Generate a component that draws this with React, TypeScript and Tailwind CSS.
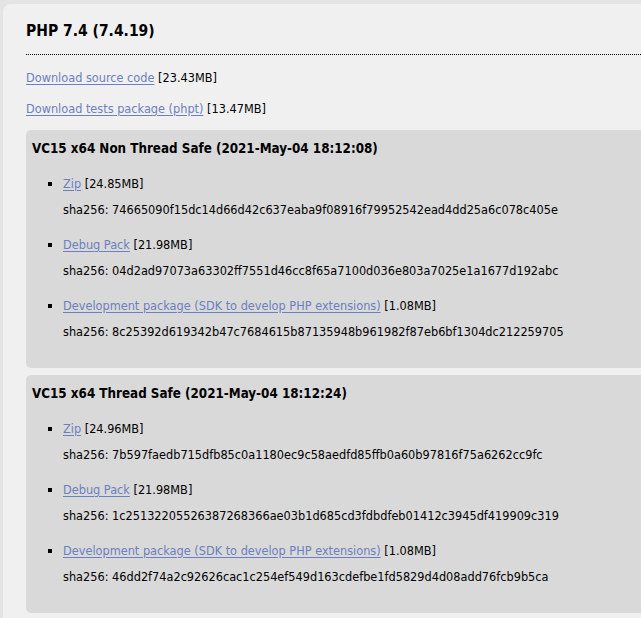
import React from "react";

const link = "text-[#6c7fbf] underline underline-offset-[2px] decoration-[#6c7fbf]";

type Item = { name: string; size: string; sha: string };

const boxes: { title: string; items: Item[] }[] = [
  {
    title: "VC15 x64 Non Thread Safe (2021-May-04 18:12:08)",
    items: [
      { name: "Zip", size: "[24.85MB]", sha: "74665090f15dc14d66d42c637eaba9f08916f79952542ead4dd25a6c078c405e" },
      { name: "Debug Pack", size: "[21.98MB]", sha: "04d2ad97073a63302ff7551d46cc8f65a7100d036e803a7025e1a1677d192abc" },
      { name: "Development package (SDK to develop PHP extensions)", size: "[1.08MB]", sha: "8c25392d619342b47c7684615b87135948b961982f87eb6bf1304dc212259705" },
    ],
  },
  {
    title: "VC15 x64 Thread Safe (2021-May-04 18:12:24)",
    items: [
      { name: "Zip", size: "[24.96MB]", sha: "7b597faedb715dfb85c0a1180ec9c58aedfd85ffb0a60b97816f75a6262cc9fc" },
      { name: "Debug Pack", size: "[21.98MB]", sha: "1c25132205526387268366ae03b1d685cd3fdbdfeb01412c3945df419909c319" },
      { name: "Development package (SDK to develop PHP extensions)", size: "[1.08MB]", sha: "46dd2f74a2c92626cac1c254ef549d163cdefbe1fd5829d4d08add76fcb9b5ca" },
    ],
  },
];

function Box({ title, items }: { title: string; items: Item[] }) {
  return (
    <div className="bg-[#d9d9d9] rounded-l-[5px] pt-[11px] pb-[28px] pl-[6px]">
      <div className="font-bold text-[13.3px] leading-[16px]">{title}</div>
      {items.map((it) => (
        <div key={it.name} className="mt-[19px]">
          <div className="flex items-center leading-[16px]">
            <span className="ml-[16px] w-[4px] h-[4px] bg-black shrink-0" />
            <span className="ml-[11px] whitespace-nowrap">
              <a href="#" className={link}>{it.name}</a> {it.size}
            </span>
          </div>
          <div className="mt-[10px] ml-[31px] leading-[16px] whitespace-nowrap">sha256: {it.sha}</div>
        </div>
      ))}
    </div>
  );
}

export default function App() {
  return (
    <div
      className="w-full h-[618px] overflow-hidden bg-[#e4e4e4] pt-[4px] pl-[3px] text-[12.6px] text-black"
      style={{ fontFamily: '"DejaVu Sans Condensed", "DejaVu Sans", sans-serif', fontStretch: "condensed" }}
    >
      <div className="bg-[#f0f0f0] rounded-tl-[8px] h-[700px] pl-[23px] pt-[17px]">
        <div className="font-bold text-[15.5px] leading-[20px] pb-[13px] border-b border-dotted border-black">
          PHP 7.4 (7.4.19)
        </div>
        <div className="mt-[15px] leading-[16px]">
          <a href="#" className={link}>Download source code</a> [23.43MB]
        </div>
        <div className="mt-[15px] leading-[16px]">
          <a href="#" className={link}>Download tests package (phpt)</a> [13.47MB]
        </div>
        <div className="mt-[13px] flex flex-col gap-[7px]">
          {boxes.map((b) => (
            <Box key={b.title} title={b.title} items={b.items} />
          ))}
        </div>
      </div>
    </div>
  );
}
